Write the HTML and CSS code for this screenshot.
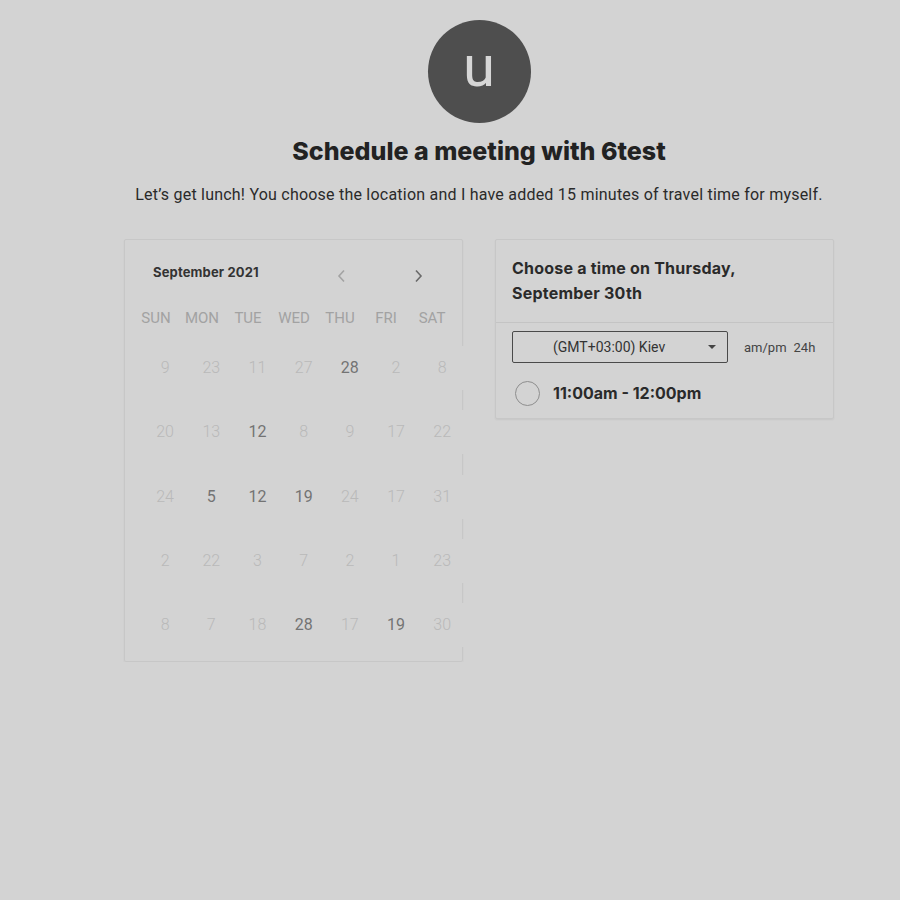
FILE: index.html
```html
<!DOCTYPE html>
<html>
<head>
<meta charset="utf-8">
<link rel="stylesheet" href="styles.css">
</head>
<body>
<div class="page">
  <div class="avatar">u</div>
  <h1 class="title">Schedule a meeting with 6test</h1>
  <p class="subtitle">Let’s get lunch! You choose the location and I have added 15 minutes of travel time for myself.</p>
  <div class="cards">
    <div class="card calendar">
      <div class="cal-head">
        <div class="month">September 2021</div>
        <div class="nav">
          <svg class="arrow prev" width="10" height="14" viewBox="0 0 10 14"><path d="M7 1.5L2 7l5 5.5" fill="none" stroke="currentColor" stroke-width="1.6"/></svg>
          <svg class="arrow next" width="10" height="14" viewBox="0 0 10 14"><path d="M3 1.5L8 7l-5 5.5" fill="none" stroke="currentColor" stroke-width="1.6"/></svg>
        </div>
      </div>
      <div class="weekdays">
        <span>SUN</span><span>MON</span><span>TUE</span><span>WED</span><span>THU</span><span>FRI</span><span>SAT</span>
      </div>
      <div class="days">
        <div class="row"><span>9</span><span>23</span><span>11</span><span>27</span><span class="on">28</span><span>2</span><span>8</span></div>
        <div class="row"><span>20</span><span>13</span><span class="on">12</span><span>8</span><span>9</span><span>17</span><span>22</span></div>
        <div class="row"><span>24</span><span class="on">5</span><span class="on">12</span><span class="on">19</span><span>24</span><span>17</span><span>31</span></div>
        <div class="row"><span>2</span><span>22</span><span>3</span><span>7</span><span>2</span><span>1</span><span>23</span></div>
        <div class="row"><span>8</span><span>7</span><span>18</span><span class="on">28</span><span>17</span><span class="on">19</span><span>30</span></div>
      </div>
    </div>
    <div class="card times">
      <div class="times-head">Choose a time on Thursday,<br>September 30th</div>
      <div class="times-body">
        <div class="controls">
          <div class="select"><span class="select-text">(GMT+03:00) Kiev</span><span class="caret"></span></div>
          <div class="format"><span>am/pm</span><span>24h</span></div>
        </div>
        <div class="slot"><span class="radio"></span><span class="slot-text">11:00am - 12:00pm</span></div>
      </div>
    </div>
  </div>
</div>
</body>
</html>
```

FILE: styles.css
```css
html, body {
  margin: 0;
  padding: 0;
  background: #d3d3d3;
}
body {
  font-family: Roboto, "Liberation Sans", sans-serif;
  color: #222;
}
.page {
  width: 710px;
  margin-left: 124px;
  display: flex;
  flex-direction: column;
  align-items: center;
  padding-top: 20px;
}
.avatar {
  width: 103px;
  height: 103px;
  border-radius: 50%;
  background: #4e4e4e;
  color: #d6d6d6;
  font-family: Roboto, sans-serif;
  font-size: 58px;
  line-height: 92px;
  text-align: center;
}
.title {
  margin: 13px 0 0;
  font-family: Inter, sans-serif;
  font-weight: 800;
  font-size: 25px;
  line-height: 30px;
  letter-spacing: 0;
  color: #222;
}
.subtitle {
  margin: 18px 0 0;
  font-size: 16px;
  line-height: 22px;
  letter-spacing: 0.22px;
  color: #2a2a2a;
  white-space: nowrap;
}
.cards {
  align-self: stretch;
  display: flex;
  gap: 32px;
  margin-top: 33px;
  align-items: flex-start;
}
.card {
  width: 337px;
  border: 1px solid #c7c7c7;
  border-radius: 2px;
  box-shadow: 0 1px 2px rgba(0,0,0,0.06);
}
.calendar {
  padding-bottom: 4px;
}
.cal-head {
  height: 64px;
  display: flex;
  align-items: flex-start;
  padding-left: 28px;
}
.month {
  margin-top: 22px;
  font-family: Inter, sans-serif;
  font-weight: 700;
  font-size: 13px;
  line-height: 20px;
  letter-spacing: 0.15px;
  color: #333;
}
.nav {
  display: flex;
  margin-top: 29px;
  margin-left: 78px;
  gap: 66px;
}
.arrow.prev { color: #a3a3a3; }
.arrow.next { color: #6a6a6a; }
.weekdays {
  display: grid;
  grid-template-columns: repeat(7, 46px);
  padding-left: 8px;
  height: 28px;
  line-height: 28px;
  font-size: 15px;
  color: #a2a2a2;
  text-align: center;
}
.days {
  margin-top: 4px;
  padding-left: 17px;
}
.row {
  display: grid;
  grid-template-columns: repeat(7, 46.2px);
  height: 64.25px;
  align-items: center;
}
.row span {
  height: 44px;
  line-height: 44px;
  text-align: center;
  background: #d3d3d3;
  font-size: 16px;
  font-weight: 300;
  color: #b9b9b9;
}
.row span.on {
  font-weight: 400;
  color: #737373;
}
.times-head {
  padding: 16px 16px;
  font-family: Inter, sans-serif;
  font-weight: 700;
  font-size: 16px;
  line-height: 25px;
  letter-spacing: 0.22px;
  color: #2a2a2a;
  border-bottom: 1px solid #c4c4c4;
}
.times-body {
  padding: 8px 16px 10px;
}
.controls {
  display: flex;
  align-items: center;
  gap: 16px;
}
.select {
  width: 214px;
  height: 30px;
  border: 1px solid #4a4a4a;
  border-radius: 2px;
  display: flex;
  align-items: center;
  position: relative;
}
.select-text {
  margin-left: 40px;
  font-size: 14px;
  color: #333;
}
.caret {
  position: absolute;
  right: 11px;
  top: 13px;
  width: 0;
  height: 0;
  border-left: 4px solid transparent;
  border-right: 4px solid transparent;
  border-top: 4px solid #444;
}
.format {
  display: flex;
  gap: 7px;
  font-size: 13px;
  color: #444;
}
.slot {
  display: flex;
  align-items: center;
  margin-top: 15px;
  padding-left: 3px;
  height: 30px;
}
.radio {
  width: 25px;
  height: 25px;
  border: 1.5px solid #8e8e8e;
  border-radius: 50%;
  box-sizing: border-box;
}
.slot-text {
  margin-left: 13px;
  font-family: Inter, sans-serif;
  font-weight: 700;
  font-size: 16px;
  color: #2a2a2a;
}
```
